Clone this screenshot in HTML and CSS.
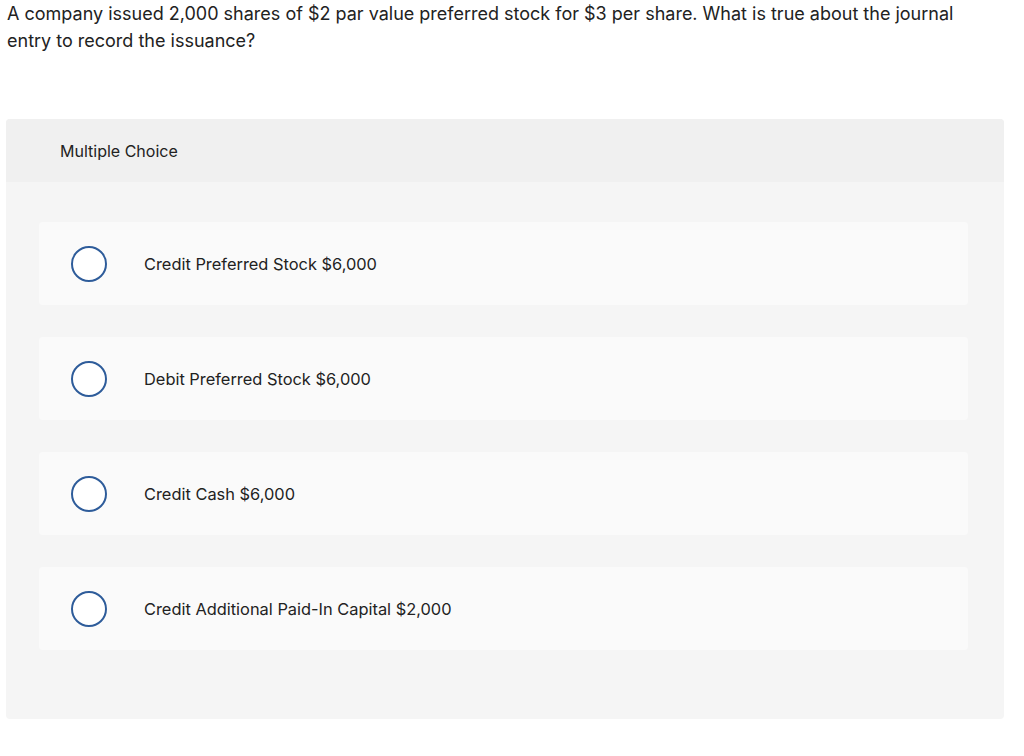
FILE: index.html
```html
<!DOCTYPE html>
<html>
<head>
<meta charset="utf-8">
<link rel="stylesheet" href="styles.css">
</head>
<body>
<div class="question">A company issued 2,000 shares of $2 par value preferred stock for $3 per share. What is true about the journal entry to record the issuance?</div>
<div class="panel">
  <div class="panel-head">Multiple Choice</div>
  <div class="panel-body">
    <div class="option"><span class="radio"></span><span class="label">Credit Preferred Stock $6,000</span></div>
    <div class="option"><span class="radio"></span><span class="label">Debit Preferred Stock $6,000</span></div>
    <div class="option"><span class="radio"></span><span class="label">Credit Cash $6,000</span></div>
    <div class="option"><span class="radio"></span><span class="label">Credit Additional Paid-In Capital $2,000</span></div>
  </div>
</div>
</body>
</html>
```

FILE: styles.css
```css
html, body {
  margin: 0;
  padding: 0;
  background: #fff;
}
body {
  font-family: Inter, "Liberation Sans", sans-serif;
  color: #222;
  padding: 0 6px;
}
.question {
  font-size: 18px;
  line-height: 27px;
  padding: 0 1px;
  margin: 0;
  max-width: 970px;
}
.panel {
  margin-top: 65px;
  width: 998px;
  border-radius: 4px;
  background: #f5f5f5;
  overflow: hidden;
}
.panel-head {
  background: #f0f0f0;
  height: 63px;
  display: flex;
  align-items: center;
  padding-left: 54px;
  font-size: 16px;
  color: #222;
}
.panel-body {
  padding: 40px 36px 69px 33px;
  display: flex;
  flex-direction: column;
  gap: 32px;
}
.option {
  height: 83px;
  background: #fafafa;
  border-radius: 4px;
  display: flex;
  align-items: center;
  padding-left: 32px;
}
.radio {
  width: 32px;
  height: 32px;
  border: 2px solid #2e5c9a;
  border-radius: 50%;
  background: #fff;
  flex: none;
}
.label {
  margin-left: 37px;
  font-size: 16.4px;
  color: #222;
}
```
